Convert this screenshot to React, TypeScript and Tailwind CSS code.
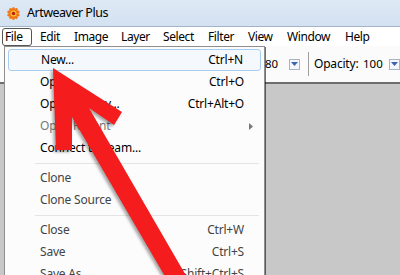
import React from "react";

const font = { fontFamily: '"Noto Sans", "Open Sans", Arial, sans-serif' };

function Logo() {
  const petals = Array.from({ length: 10 }, (_, i) => i * 36);
  return (
    <svg width="13" height="13" viewBox="0 0 26 26">
      {petals.map((a) => (
        <ellipse key={a} cx="13" cy="5" rx="3.2" ry="5" fill="#f07818" transform={`rotate(${a} 13 13)`} />
      ))}
      <circle cx="13" cy="13" r="6" fill="#f9c230" />
      <circle cx="13" cy="13" r="3.5" fill="#b8200e" />
    </svg>
  );
}

type Item = { label: string; shortcut?: string; disabled?: boolean; dim?: boolean; sub?: boolean; active?: boolean } | "sep";

const items: Item[] = [
  { label: "New...", shortcut: "Ctrl+N", active: true },
  { label: "Open...", shortcut: "Ctrl+O" },
  { label: "Open Library...", shortcut: "Ctrl+Alt+O" },
  { label: "Open Recent", disabled: true, sub: true },
  { label: "Connect to Team..." },
  "sep",
  { label: "Clone", dim: true },
  { label: "Clone Source", dim: true },
  "sep",
  { label: "Close", shortcut: "Ctrl+W", dim: true },
  { label: "Save", shortcut: "Ctrl+S", dim: true },
  { label: "Save As...", shortcut: "Shift+Ctrl+S", dim: true },
];

function DropArrow() {
  return (
    <div className="w-[11px] h-[11px] border border-[#a9b4c2] bg-[#f4f6f9] flex items-center justify-center">
      <svg width="7" height="4" viewBox="0 0 7 4">
        <path d="M0 0 L7 0 L3.5 4 Z" fill="#3a63b0" />
      </svg>
    </div>
  );
}

export default function App() {
  const menuNames: [string, string][] = [
    ["File", "w-[35px]"],
    ["Edit", "w-[34px]"],
    ["Image", "w-[47px]"],
    ["Layer", "w-[42px]"],
    ["Select", "w-[45px]"],
    ["Filter", "w-[40px]"],
    ["View", "w-[39px]"],
    ["Window", "w-[58px]"],
    ["Help", "w-[40px]"],
  ];
  return (
    <div className="relative w-[400px] h-[275px] overflow-hidden bg-white text-black" style={font}>
      {/* Title bar */}
      <div className="h-[27px] bg-gradient-to-b from-[#dfe9f5] to-[#d3e1f1] flex items-center pl-[7px] gap-[7px] border-b border-[#a3b4c8]">
        <Logo />
        <span className="text-[12.5px] leading-none tracking-[-0.5px] text-black">Artweaver Plus</span>
      </div>
      <div className="flex h-[248px]">
        <div className="w-[4px] bg-[#d6e2f0]" />
        <div className="flex-1 flex flex-col">
          {/* Menubar */}
          <div className="h-[19px] flex items-center pl-[2px] bg-white text-[12px] tracking-[-0.4px]">
            {menuNames.map(([n, w], i) => (
              <div key={n} className={`${w} h-[18px] flex items-center`}>
                <span
                  className={
                    i === 0
                      ? "h-[18px] px-[2px] w-[30px] flex items-center border border-[#555] rounded-[3px]"
                      : "px-[3px]"
                  }
                >
                  {n}
                </span>
              </div>
            ))}
          </div>
          {/* Toolbar */}
          <div className="h-[38px] flex items-center pl-[265px] bg-[#fbfbfb] border-b-2 border-[#6d6d6d]">
            <span className="text-[11.5px] w-[24px]">80</span>
            <DropArrow />
            <div className="w-px h-[24px] bg-[#a0a0a0] ml-[8px] mr-[5px]" />
            <span className="text-[12px] w-[49px] tracking-[-0.2px]">Opacity:</span>
            <span className="text-[11.5px] w-[26px]">100</span>
            <DropArrow />
          </div>
          {/* Canvas */}
          <div className="flex-1 bg-[#c8c8c8]" />
        </div>
      </div>

      {/* Dropdown menu */}
      <div className="absolute left-[4px] top-[46px] w-[261px] border border-[#8f8f8f] bg-[#fcfcfc] px-[3px] py-[2px] shadow-[1px_1px_0_rgba(0,0,0,0.55)] text-[12px] tracking-[-0.2px]">
        {items.map((it, i) =>
          it === "sep" ? (
            <div key={i} className="h-[8px] flex items-center pl-[27px] pr-[2px]">
              <div className="flex-1 h-px bg-[#e4e4e4]" />
            </div>
          ) : (
            <div
              key={i}
              className={
                "h-[22px] flex items-center pl-[32px] pr-[17px] rounded-[3px] " +
                (it.active ? "border border-[#a9cdf0] bg-[#f5f9fe] pl-[31px] pr-[16px]" : "") +
                (it.disabled ? " text-[#777777]" : it.dim ? " text-[#444444]" : " text-black")
              }
            >
              <span className="flex-1">{it.label}</span>
              {it.shortcut && <span>{it.shortcut}</span>}
              {it.sub && (
                <svg width="4" height="7" viewBox="0 0 4 7" className="mr-[-9px]">
                  <path d="M0 0 L4 3.5 L0 7 Z" fill="#777" />
                </svg>
              )}
            </div>
          )
        )}
      </div>

      {/* Red arrow */}
      <svg
        className="absolute left-0 top-0"
        width="400"
        height="275"
        viewBox="0 0 400 275"
        style={{ filter: "drop-shadow(-2px 2px 1.5px rgba(0,0,0,0.35))" }}
      >
        <polygon
          points="53,68 122,112 114,125 89,108 214,324 198,333 72,117 72,150 56,150"
          fill="#f41c1c"
        />
      </svg>
    </div>
  );
}
